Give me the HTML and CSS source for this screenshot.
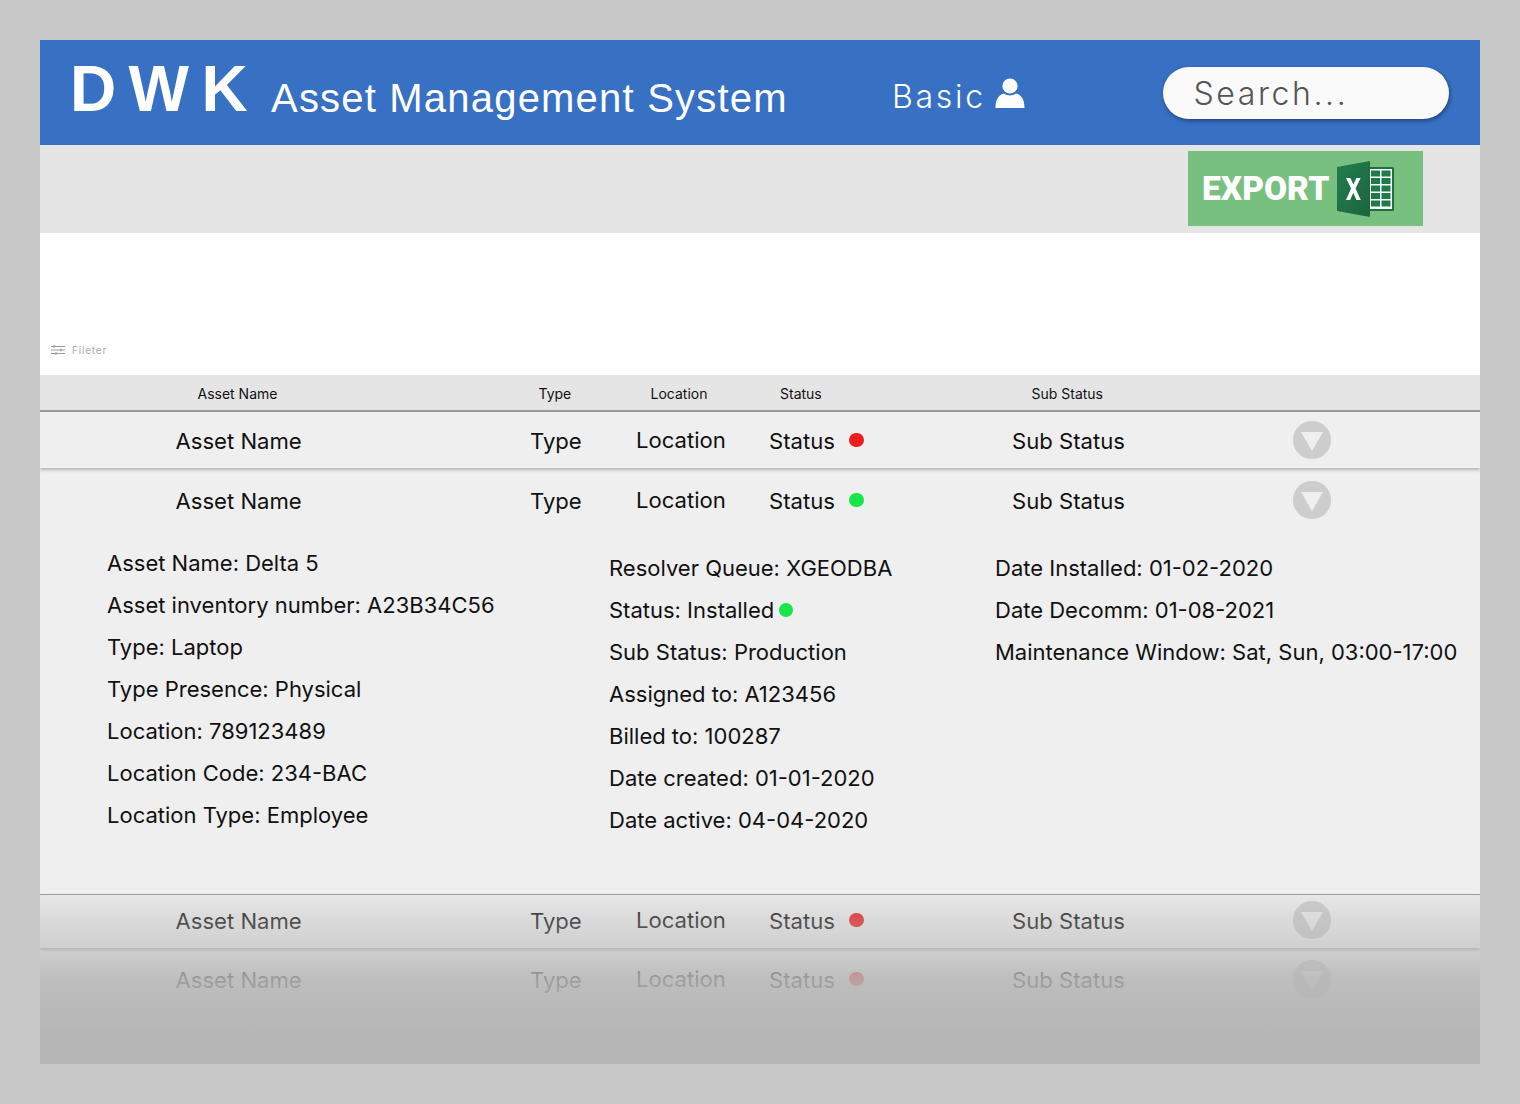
FILE: index.html
```html
<!DOCTYPE html>
<html lang="en">
<head>
    <meta charset="UTF-8">
    <meta name="viewport" content="width=device-width, initial-scale=1.0">
    <title>DWK Asset Management System</title>
    <link rel="stylesheet" href="styles.css">
</head>
<body>
    <div class="app">
        <header class="topbar">
            <div class="logo">DWK</div>
            <div class="app-title">Asset Management System</div>
            <div class="user">
                <span>Basic</span>
                <svg class="user-icon" viewBox="0 0 30 30"><circle cx="15" cy="8" r="7.6" fill="#fff"/><path d="M0.5 30 C0.5 21 4 16.5 9 15.5 C12 18 18 18 21 15.5 C26 16.5 29.5 21 29.5 30 Z" fill="#fff"/></svg>
            </div>
            <div class="search">Search...</div>
        </header>

        <div class="toolbar">
            <div class="export">
                <span>EXPORT</span>
                <svg class="excel" viewBox="0 0 58 56">
                    <defs>
                        <linearGradient id="excel-cover" x1="0" y1="0" x2="1" y2="1">
                            <stop offset="0" stop-color="#237d4e"/>
                            <stop offset="1" stop-color="#1a653e"/>
                        </linearGradient>
                    </defs>
                    <rect x="30" y="6" width="27" height="44" rx="1.5" fill="#1d6f42"/>
                    <path d="M33 8h22v40h-22z" fill="#fff"/>
                    <path d="M34 9.500h9v6h-9zM44.500 9.500h9v6h-9zM34 17h9v6h-9zM44.500 17h9v6h-9zM34 24.500h9v6h-9zM44.500 24.500h9v6h-9zM34 32h9v6h-9zM44.500 32h9v6h-9zM34 39.500h9v6h-9zM44.500 39.500h9v6h-9z" fill="#1f7a4a"/>
                    <path d="M0 6 L33 0 V56 L0 50 Z" fill="url(#excel-cover)"/>
                    <path d="M9 17h4.400l3 6.600 3-6.600h4.200l-5 10.600 5.200 11.400h-4.400l-3.100-7.200-3.100 7.200h-4.300l5.200-11.400z" fill="#fff"/>
                </svg>
            </div>
        </div>

        <section class="filter-area">
            <div class="filter">
                <svg class="filter-icon" viewBox="0 0 14 10"><path d="M0 1.500h14M0 5h14M0 8.500h14M3 0v3M10 3.500v3M5 7v3" stroke="#999" stroke-width="1" fill="none"/></svg>
                <span>Fileter</span>
            </div>
        </section>

        <div class="table-head">
            <span class="head-name">Asset Name</span>
            <span class="head-type">Type</span>
            <span class="head-location">Location</span>
            <span class="head-status">Status</span>
            <span class="head-sub">Sub Status</span>
        </div>

        <div class="row row-shadow">
            <span>Asset Name</span>
            <span>Type</span>
            <span class="cell-location">Location</span>
            <span class="cell-status">Status <i class="dot red"></i></span>
            <span>Sub Status</span>
            <span class="toggle"></span>
        </div>

        <div class="row row-open">
            <span>Asset Name</span>
            <span>Type</span>
            <span class="cell-location">Location</span>
            <span class="cell-status">Status <i class="dot green"></i></span>
            <span>Sub Status</span>
            <span class="toggle"></span>
        </div>

        <div class="details">
            <div class="col col-1">
                <p>Asset Name: Delta 5</p>
                <p>Asset inventory number: A23B34C56</p>
                <p>Type: Laptop</p>
                <p>Type Presence: Physical</p>
                <p>Location: 789123489</p>
                <p>Location Code: 234-BAC</p>
                <p>Location Type: Employee</p>
            </div>
            <div class="col col-2">
                <p>Resolver Queue: XGEODBA</p>
                <p class="installed">Status: Installed<i class="dot green"></i></p>
                <p>Sub Status: Production</p>
                <p>Assigned to: A123456</p>
                <p>Billed to: 100287</p>
                <p>Date created: 01-01-2020</p>
                <p>Date active: 04-04-2020</p>
            </div>
            <div class="col col-3">
                <p>Date Installed: 01-02-2020</p>
                <p>Date Decomm: 01-08-2021</p>
                <p>Maintenance Window: Sat, Sun, 03:00-17:00</p>
            </div>
        </div>

        <div class="row row-shadow row-next">
            <span>Asset Name</span>
            <span>Type</span>
            <span class="cell-location">Location</span>
            <span class="cell-status">Status <i class="dot red"></i></span>
            <span>Sub Status</span>
            <span class="toggle"></span>
        </div>

        <div class="row row-last">
            <span>Asset Name</span>
            <span>Type</span>
            <span class="cell-location">Location</span>
            <span class="cell-status">Status <i class="dot red"></i></span>
            <span>Sub Status</span>
            <span class="toggle"></span>
        </div>

        <div class="fade"></div>
    </div>
</body>
</html>
```

FILE: styles.css
```css
body {
    margin: 0;
    padding: 40px;
    background-color: #c8c8c8;
    font-family: Inter, "Liberation Sans", sans-serif;
    color: #111;
}

.app {
    position: relative;
    width: 1440px;
    height: 1024px;
    overflow: hidden;
    background-color: #efefef;
}

.topbar {
    display: flex;
    align-items: flex-start;
    height: 105px;
    background-color: #3870c4;
    color: #fff;
}

.logo {
    width: 201px;
    margin: 13px 0 0 30px;
    font-family: "Liberation Sans", sans-serif;
    font-size: 64px;
    font-weight: 700;
    line-height: 72px;
    letter-spacing: 12.4px;
}

.app-title {
    width: 622px;
    margin-top: 33px;
    font-family: "Liberation Sans", sans-serif;
    font-size: 40px;
    line-height: 50px;
    letter-spacing: 1.2px;
}

.user {
    display: flex;
    align-items: flex-start;
    width: 270px;
    margin: 37px 0 0 -1px;
    font-size: 32px;
    font-weight: 300;
    line-height: 40px;
    letter-spacing: 2.7px;
}

.user-icon {
    width: 30px;
    height: 30px;
    margin: 1px 0 0 9px;
}

.search {
    width: 255.5px;
    height: 52px;
    margin: 27px 0 0 1px;
    padding-left: 30.5px;
    border-radius: 26px;
    background-color: #fafafa;
    box-shadow: 1px 2px 4px rgba(0, 0, 0, 0.4);
    color: #555;
    font-size: 32px;
    font-weight: 300;
    line-height: 53px;
    letter-spacing: 2.6px;
}

.toolbar {
    display: flex;
    justify-content: flex-end;
    height: 88px;
    padding-right: 57px;
    background-color: #e5e5e5;
}

.export {
    display: flex;
    align-items: center;
    width: 235px;
    height: 75px;
    margin-top: 6px;
    padding-left: 14px;
    box-sizing: border-box;
    background-color: #78c07f;
    color: #fff;
    font-family: Roboto, sans-serif;
    font-size: 33.5px;
    font-weight: 900;
}

.excel {
    width: 58px;
    height: 56px;
    margin-left: 8px;
}

.filter-area {
    display: flex;
    align-items: flex-end;
    height: 142px;
    background-color: #fff;
}

.filter {
    display: flex;
    align-items: center;
    gap: 7px;
    margin: 0 0 19px 11px;
    color: #aaa;
    font-size: 10px;
    line-height: 12px;
    letter-spacing: 0.8px;
}

.filter-icon {
    width: 14px;
    height: 10px;
}

.table-head {
    display: grid;
    grid-template-columns: 341px 112px 129.5px 251.5px 1fr;
    align-items: center;
    height: 34px;
    padding: 1px 0 0 157.5px;
    background-color: #e5e5e5;
    border-bottom: 2px solid #999;
    font-size: 14px;
}

.row {
    display: grid;
    grid-template-columns: 354.5px 106px 133px 243px 281px 38px;
    align-items: center;
    height: 56px;
    padding-left: 135.5px;
    font-size: 22.1px;
}

.row span {
    padding-top: 2px;
    white-space: nowrap;
}

.row .toggle {
    padding-top: 0;
}

.cell-location {
    position: relative;
    top: -1px;
}

.row-shadow {
    position: relative;
    box-shadow: 0 2px 3px rgba(0, 0, 0, 0.25);
}

.row-open {
    height: 60px;
    margin-top: 2px;
}

.dot {
    display: inline-block;
    width: 14.5px;
    height: 14.5px;
    margin-left: 8px;
    border-radius: 50%;
    vertical-align: 2px;
}

.red {
    background-color: #ee1c1c;
}

.green {
    background-color: #17e648;
}

.toggle {
    position: relative;
    width: 37.5px;
    height: 37.5px;
    border-radius: 50%;
    background-color: #cdcdcd;
}

/* triangle inside the round button */
.toggle::after {
    content: "";
    position: absolute;
    top: 11px;
    left: 8px;
    border-left: 11px solid transparent;
    border-right: 11px solid transparent;
    border-top: 19px solid #efefef;
}

.details {
    display: flex;
    height: 364px;
    padding-left: 67px;
    font-size: 22px;
}

.col p {
    margin: 0;
    height: 42px;
    line-height: 42px;
    white-space: nowrap;
}

.col-1 {
    width: 502px;
    padding-top: 12px;
}

.col-2 {
    width: 386px;
    padding-top: 17px;
}

.col-3 {
    padding-top: 17px;
}

.installed .dot {
    margin-left: 4.5px;
    vertical-align: 1px;
}

.row-next {
    border-top: 1px solid #999;
    height: 50px;
    padding-bottom: 3px;
}

.row-last {
    margin-top: 3px;
}

/* the list fades out at the bottom of the page */
.fade {
    position: absolute;
    left: 0;
    right: 0;
    bottom: 0;
    height: 170px;
    background: linear-gradient(rgba(181, 181, 181, 0.12), rgba(181, 181, 181, 0.36) 15%, rgba(181, 181, 181, 0.53) 31%, rgba(181, 181, 181, 0.85) 50%, #b5b5b5 86%);
}
```
